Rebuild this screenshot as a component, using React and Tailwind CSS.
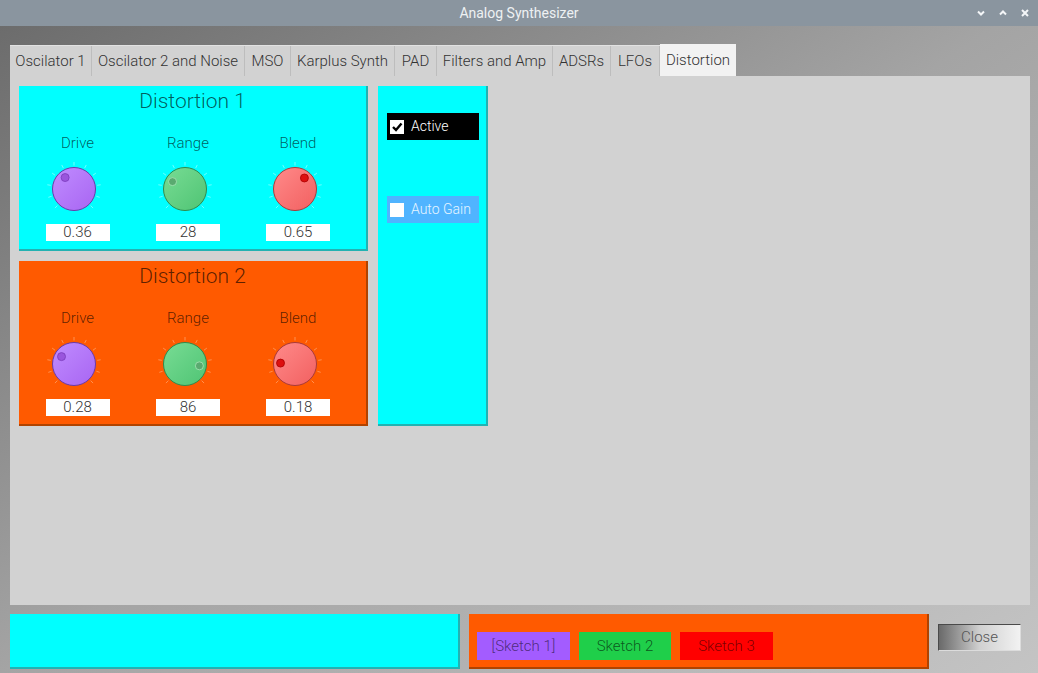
import React from "react";

const TABS = [
  { t: "Oscilator 1", w: "w-[82px]" },
  { t: "Oscilator 2 and Noise", w: "w-[153px]" },
  { t: "MSO", w: "w-[46px]" },
  { t: "Karplus Synth", w: "w-[104px]" },
  { t: "PAD", w: "w-[42px]" },
  { t: "Filters and Amp", w: "w-[116px]" },
  { t: "ADSRs", w: "w-[58px]" },
  { t: "LFOs", w: "w-[49px]" },
];

function Knob({ frac, fill1, fill2, stroke, dot, dotStroke, tick }) {
  const a = ((-135 + 270 * frac) * Math.PI) / 180;
  const dx = 28 + Math.sin(a) * 14.5;
  const dy = 28 - Math.cos(a) * 14.5;
  const ticks = [];
  for (let i = 0; i <= 10; i++) {
    const ta = ((-135 + 27 * i) * Math.PI) / 180;
    ticks.push(
      <line
        key={i}
        x1={28 + Math.sin(ta) * 23.5}
        y1={28 - Math.cos(ta) * 23.5}
        x2={28 + Math.sin(ta) * 27}
        y2={28 - Math.cos(ta) * 27}
        stroke={tick}
        strokeWidth="1"
        strokeOpacity="0.5"
      />
    );
  }
  const id = "g" + fill1.replace("#", "") + Math.round(frac * 100);
  return (
    <svg width="56" height="56" viewBox="0 0 56 56">
      <defs>
        <linearGradient id={id} x1="0" y1="0" x2="1" y2="1">
          <stop offset="0" stopColor={fill1} />
          <stop offset="1" stopColor={fill2} />
        </linearGradient>
      </defs>
      {ticks}
      <circle cx="28" cy="28" r="21.5" fill={`url(#${id})`} stroke={stroke} strokeWidth="1" />
      <circle cx={dx} cy={dy} r="4" fill={dot} stroke={dotStroke} strokeWidth="0.8" />
    </svg>
  );
}

const PURPLE = { fill1: "#c08cff", fill2: "#a865f2", stroke: "#6a3aa8", dot: "#9a55dd", dotStroke: "#7a3bbb" };
const GREEN = { fill1: "#78dc94", fill2: "#4fc474", stroke: "#2f8a4c", dot: "#5aaa70", dotStroke: "#a8e6b8" };
const RED = { fill1: "#ff8a8a", fill2: "#f26060", stroke: "#a83a3a", dot: "#dd1010", dotStroke: "#aa0000" };

function DistPanel({ title, bg, edge, tick, values }) {
  const cols = [
    { label: "Drive", knob: PURPLE, frac: values[0].f, v: values[0].v },
    { label: "Range", knob: GREEN, frac: values[1].f, v: values[1].v },
    { label: "Blend", knob: RED, frac: values[2].f, v: values[2].v },
  ];
  return (
    <div className={`w-[349px] h-[165px] ${bg} ${edge} border-r-2 border-b-2 flex flex-col items-stretch`}>
      <div className="h-[30px] leading-[30px] text-center text-[21px] font-light text-black/65">{title}</div>
      <div className="pl-[3px] mt-[18px] grid grid-cols-[111px_110px_110px]">
        {cols.map((c) => (
          <div key={c.label} className="flex flex-col items-center">
            <div className="h-[18px] leading-[18px] text-[15px] font-light text-black/65">{c.label}</div>
            <div className="mt-[9px] -ml-[7px]">
              <Knob frac={c.frac} tick={tick} {...c.knob} />
            </div>
            <div className="mt-[7px] w-[64px] h-[17px] bg-white text-center text-[15px] font-light leading-[17px] text-[#333]">
              {c.v}
            </div>
          </div>
        ))}
      </div>
    </div>
  );
}

export default function App() {
  return (
    <div
      className="w-[1038px] h-[673px] overflow-hidden flex flex-col bg-linear-to-br from-[#6a6a6a] via-[#a4a4a4] to-[#c4c4c4]"
      style={{ fontFamily: "Roboto, 'Noto Sans', sans-serif" }}
    >
      {/* Title bar */}
      <div className="relative h-[26px] shrink-0 bg-[#8a959f] flex items-center justify-center">
        <span className="text-[14px] text-[#eef1f3]">Analog Synthesizer</span>
        <div className="absolute right-[8px] top-0 h-[26px] flex items-center gap-[12px] text-[#f4f6f8]">
          <svg width="10" height="10" viewBox="0 0 10 10">
            <path d="M2 3.5 L5 6.5 L8 3.5" fill="none" stroke="currentColor" strokeWidth="2" />
          </svg>
          <svg width="10" height="10" viewBox="0 0 10 10">
            <path d="M2 6.5 L5 3.5 L8 6.5" fill="none" stroke="currentColor" strokeWidth="2" />
          </svg>
          <svg width="10" height="10" viewBox="0 0 10 10">
            <path d="M2 2 L8 8 M8 2 L2 8" fill="none" stroke="currentColor" strokeWidth="2" />
          </svg>
        </div>
      </div>

      {/* Tabs */}
      <div className="mt-[18px] ml-[10px] flex h-[32px] items-end">
        <div className="flex h-[31px] bg-[#d2d2d2] border-t border-[#e2e2e2]">
          {TABS.map((tab) => (
            <div
              key={tab.t}
              className={`${tab.w} h-full border-r border-[#bdbdbd] flex items-center justify-center text-[15px] font-light text-[#333] whitespace-nowrap`}
            >
              {tab.t}
            </div>
          ))}
        </div>
        <div className="w-[76px] h-[32px] bg-[#f2f2f2] flex items-center justify-center text-[15px] font-light text-[#333]">
          Distortion
        </div>
      </div>

      {/* Pane */}
      <div className="ml-[10px] w-[1020px] h-[529px] bg-[#d2d2d2] shrink-0 flex gap-[10px] pl-[9px] pt-[10px]">
        <div className="flex flex-col gap-[10px]">
          <DistPanel
            title="Distortion 1"
            bg="bg-[#00ffff]"
            edge="border-[#22b2b2]"
            tick="#d8ffff"
            values={[
              { f: 0.36, v: "0.36" },
              { f: 0.28, v: "28" },
              { f: 0.65, v: "0.65" },
            ]}
          />
          <DistPanel
            title="Distortion 2"
            bg="bg-[#ff5a00]"
            edge="border-[#b04300]"
            tick="#ffc8a0"
            values={[
              { f: 0.28, v: "0.28" },
              { f: 0.86, v: "86" },
              { f: 0.18, v: "0.18" },
            ]}
          />
        </div>
        <div className="w-[110px] h-[340px] bg-[#00ffff] border-r-2 border-b-2 border-[#22b2b2] pl-[9px] pt-[27px]">
          <div className="w-[92px] h-[27px] bg-black flex items-center pl-[3px]">
            <div className="w-[14px] h-[14px] bg-white flex items-center justify-center">
              <svg width="12" height="12" viewBox="0 0 12 12">
                <path d="M2 6 L5 9 L10.5 2.5" fill="none" stroke="#000" strokeWidth="2.4" />
              </svg>
            </div>
            <span className="ml-[7px] text-[14px] font-light text-white">Active</span>
          </div>
          <div className="mt-[56px] w-[92px] h-[27px] bg-[#50b4ff] flex items-center pl-[3px]">
            <div className="w-[14px] h-[14px] bg-white" />
            <span className="ml-[7px] text-[14px] font-light text-[#e6f4ff]">Auto Gain</span>
          </div>
        </div>
      </div>

      {/* Bottom bar */}
      <div className="mt-[9px] ml-[10px] flex items-start">
        <div className="w-[450px] h-[55px] bg-[#00ffff] border-r-2 border-b-2 border-[#22b2b2]" />
        <div className="ml-[9px] w-[460px] h-[55px] bg-[#ff5a00] border-r-2 border-b-2 border-[#b04300] flex items-start gap-[9px] pl-[8px] pt-[18px]">
          <div className="w-[93px] h-[28px] bg-[#a35cff] flex items-center justify-center text-[15px] font-light text-black/55">
            [Sketch 1]
          </div>
          <div className="w-[92px] h-[28px] bg-[#1fcf4a] flex items-center justify-center text-[15px] font-light text-black/60">
            Sketch 2
          </div>
          <div className="w-[93px] h-[28px] bg-[#ff0000] flex items-center justify-center text-[15px] font-light text-black/55">
            Sketch 3
          </div>
        </div>
        <div className="ml-[9px] mt-[10px] w-[83px] h-[27px] bg-linear-to-r from-[#6a6a6a] via-[#d0d0d0] to-[#f2f2f2] border-t border-l border-[#4a4a4a] border-r border-b border-r-[#dcdcdc] border-b-[#dcdcdc] flex items-center justify-center text-[15px] font-light text-[#555]">
          Close
        </div>
      </div>
    </div>
  );
}
